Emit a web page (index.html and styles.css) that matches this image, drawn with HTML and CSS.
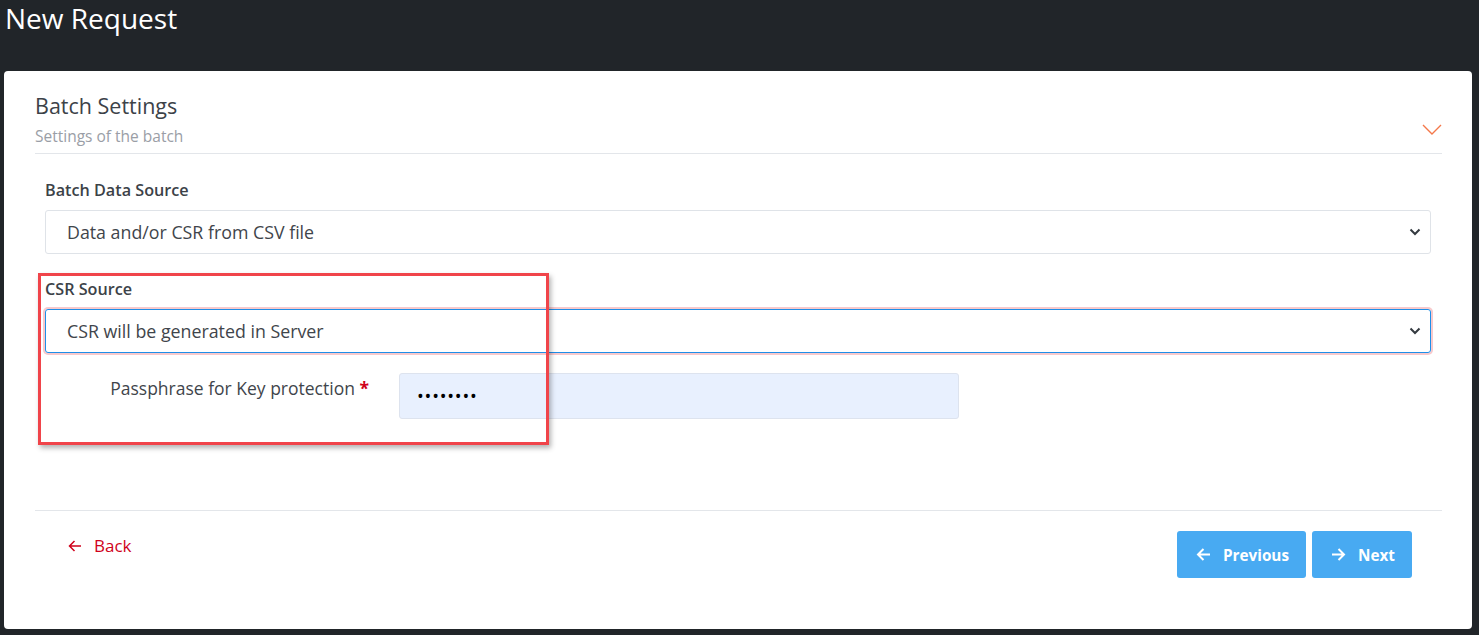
FILE: index.html
```html
<!DOCTYPE html>
<html lang="en">
<head>
    <meta charset="UTF-8">
    <title>New Request</title>
    <link rel="stylesheet" href="styles.css">
</head>
<body>

<header class="topbar">
    <h1>New Request</h1>
</header>

<div class="card">
    <div class="card-head">
        <div>
            <h3 class="card-title">Batch Settings</h3>
            <div class="card-sub">Settings of the batch</div>
        </div>
        <svg class="collapse-icon" width="20" height="12" viewBox="0 0 20 12"><path d="M1 1 L10 10 L19 1" fill="none" stroke="#f4784a" stroke-width="1.4"/></svg>
    </div>

    <div class="form-body">
        <div class="field">
            <label class="field-label">Batch Data Source</label>
            <div class="select">
                <span>Data and/or CSR from CSV file</span>
                <svg class="caret" width="12" height="8" viewBox="0 0 12 8"><path d="M1.5 1.5 L6 6 L10.5 1.5" fill="none" stroke="#343a40" stroke-width="2"/></svg>
            </div>
        </div>

        <div class="field field-csr">
            <label class="field-label">CSR Source</label>
            <div class="select select-focus">
                <span>CSR will be generated in Server</span>
                <svg class="caret" width="12" height="8" viewBox="0 0 12 8"><path d="M1.5 1.5 L6 6 L10.5 1.5" fill="none" stroke="#343a40" stroke-width="2"/></svg>
            </div>
            <div class="row">
                <label class="row-label">Passphrase for Key protection <span class="req">*</span></label>
                <div class="pass-input">••••••••</div>
            </div>
            <div class="highlight"></div>
        </div>
    </div>

    <div class="card-foot">
        <a class="back-link" href="#">
            <svg width="14" height="12" viewBox="0 0 14 12"><path d="M13 6 H1.5 M6.5 1 L1.5 6 L6.5 11" fill="none" stroke="#d0021b" stroke-width="1.5"/></svg>
            Back
        </a>
        <div class="nav-buttons">
            <button class="btn">
                <svg width="15" height="13" viewBox="0 0 15 13"><path d="M14 6.5 H2 M7.5 1 L2 6.5 L7.5 12" fill="none" stroke="#fff" stroke-width="2"/></svg>
                Previous
            </button>
            <button class="btn">
                <svg width="15" height="13" viewBox="0 0 15 13"><path d="M1 6.5 H13 M7.5 1 L13 6.5 L7.5 12" fill="none" stroke="#fff" stroke-width="2"/></svg>
                Next
            </button>
        </div>
    </div>
</div>

</body>
</html>
```

FILE: styles.css
```css
body { margin: 0; background: #212529; font-family: 'Open Sans', 'Noto Sans', sans-serif; color: #495057; height: 635px; overflow: hidden; }

.topbar { height: 71px; }
.topbar h1 { margin: 0; padding: 0 0 0 5px; font-size: 28px; font-weight: 400; color: #fff; line-height: 36px; }

.card { background: #fff; margin: 0 7px 0 4px; height: 558px; border-radius: 4px; padding: 20px 30px 0 31px; box-sizing: border-box; }

.card-head { display: flex; justify-content: space-between; align-items: flex-end; border-bottom: 1px solid #e3e6ea; padding-bottom: 6px; }
.card-title { margin: 0; font-size: 21.5px; font-weight: 400; color: #3c4248; line-height: 30px; }
.card-sub { font-size: 15.5px; color: #9a9ea6; line-height: 22px; margin-top: 4px; }
.collapse-icon { margin: 0 0 11px; }

.form-body { padding: 25px 11px 0 10px; }
.field { margin-bottom: 24px; }
.field-label { display: block; font-size: 16.2px; font-weight: 600; color: #3c4248; line-height: 22px; margin-bottom: 9px; }

.select { display: flex; justify-content: space-between; align-items: center; height: 44px; box-sizing: border-box; border: 1px solid #dfe3e8; border-radius: 3px; padding: 0 9px 0 21px; font-size: 17.8px; color: #3f454b; }
.select-focus { border-color: #1e8fe8; box-shadow: 0 0 0 2px #f7c9cc; }

.field-csr { position: relative; padding-bottom: 26px; margin-bottom: 0; }
.row { display: grid; grid-template-columns: 324px 560px; gap: 30px; align-items: start; margin-top: 20px; }
.row-label { text-align: right; font-size: 17.5px; color: #3f454b; line-height: 26px; padding-top: 2px; }
.req { color: #d0021b; font-weight: 700; }
.pass-input { height: 46px; box-sizing: border-box; background: #e8f0fe; border: 1px solid #dde3ee; border-radius: 3px; padding: 10px 17px; font-size: 18px; color: #000; letter-spacing: 0.8px; line-height: 24px; }

.highlight { position: absolute; left: -7px; top: -5px; bottom: 0; width: 505px; border: 3px solid #f0444a; box-shadow: 2px 3px 5px rgba(0,0,0,0.3); pointer-events: none; }

.card-foot { display: flex; justify-content: space-between; align-items: flex-start; border-top: 1px solid #e3e6ea; margin-top: 65px; padding: 20px 30px 0 33px; }
.back-link { display: flex; align-items: center; gap: 12px; color: #d0021b; text-decoration: none; font-size: 17px; line-height: 30px; }
.nav-buttons { display: flex; gap: 6px; margin-top: 0; }
.btn { display: flex; align-items: center; gap: 12px; height: 47px; border: none; border-radius: 3px; background: #48aaf2; color: #fff; font-family: inherit; font-size: 15.3px; font-weight: 700; padding: 0 17px 0 19px; }
```
